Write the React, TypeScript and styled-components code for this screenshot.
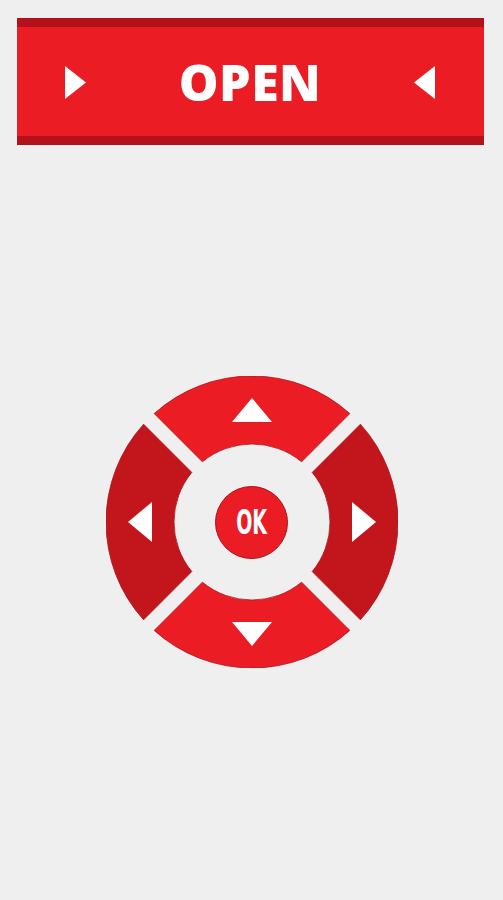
import React from "react";
import styled, { createGlobalStyle } from "styled-components";

const colors = {
  page: "#efefef",
  red: "#ec1c24",
  darkRed: "#c3161c",
  strip: "#b3121a",
  edge: "#a8121a",
  white: "#ffffff",
};

const GlobalStyle = createGlobalStyle`
  html, body {
    margin: 0;
    padding: 0;
    background: ${colors.page};
  }
  body {
    font-family: "Open Sans", "Liberation Sans", sans-serif;
  }
`;

const Screen = styled.div`
  width: 503px;
  height: 900px;
  display: flex;
  flex-direction: column;
  align-items: flex-start;
  background: ${colors.page};
`;

const OpenBar = styled.button`
  box-sizing: border-box;
  margin: 18px 0 0 17px;
  width: 467px;
  height: 127px;
  padding: 0 48px 0 47px;
  display: flex;
  flex-direction: row;
  align-items: center;
  justify-content: space-between;
  background: ${colors.red};
  border: none;
  border-top: 9px solid ${colors.strip};
  border-bottom: 9px solid ${colors.strip};
  cursor: pointer;
`;

const BarLabel = styled.span`
  font-family: "Open Sans", "Liberation Sans", sans-serif;
  font-weight: 800;
  font-size: 50px;
  line-height: 1;
  letter-spacing: 0.5px;
  color: ${colors.white};
  margin-top: 1px;
`;

const Arrow = styled.svg`
  width: 22px;
  height: 33px;
  display: block;
  margin-top: 1px;
`;

const PadArea = styled.div`
  align-self: stretch;
  display: flex;
  justify-content: center;
  margin-top: 231px;
`;

const Pad = styled.div`
  display: grid;
  place-items: center;
  width: 292px;
  height: 292px;

  & > * {
    grid-area: 1 / 1;
  }
`;

const Ring = styled.svg`
  width: 292px;
  height: 292px;
  display: block;
`;

const OkButton = styled.button`
  width: 73px;
  height: 73px;
  border-radius: 50%;
  border: 1px solid ${colors.edge};
  background: ${colors.red};
  display: flex;
  align-items: center;
  justify-content: center;
  padding: 0;
  cursor: pointer;
`;

const OkLabel = styled.span`
  font-family: "DejaVu Sans", "Liberation Sans", sans-serif;
  font-weight: 700;
  font-size: 34px;
  line-height: 1;
  color: ${colors.white};
  transform: scaleX(0.56);
  display: inline-block;
`;

const segment =
  "M -97.8 -108.4 A 146 146 0 0 1 97.8 -108.4 L 49.6 -60.2 A 78 78 0 0 0 -49.6 -60.2 Z";
const chevron = "M 0 -124 L 20 -100 L -20 -100 Z";

const directions = [
  { name: "up", angle: 0, fill: colors.red },
  { name: "right", angle: 90, fill: colors.darkRed },
  { name: "down", angle: 180, fill: colors.red },
  { name: "left", angle: 270, fill: colors.darkRed },
];

const App = () => {
  return (
    <Screen>
      <GlobalStyle />
      <OpenBar>
        <Arrow viewBox="0 0 22 33">
          <path d="M1 0 L22 16.5 L1 33 Z" fill={colors.white} />
        </Arrow>
        <BarLabel>OPEN</BarLabel>
        <Arrow viewBox="0 0 22 33">
          <path d="M21 0 L0 16.5 L21 33 Z" fill={colors.white} />
        </Arrow>
      </OpenBar>
      <PadArea>
        <Pad>
          <Ring viewBox="-146 -146 292 292">
            {directions.map((d) => (
              <g key={d.name} transform={`rotate(${d.angle})`}>
                <path
                  d={segment}
                  fill={d.fill}
                  stroke={colors.edge}
                  strokeWidth={0.8}
                />
                <path d={chevron} fill={colors.white} />
              </g>
            ))}
          </Ring>
          <OkButton>
            <OkLabel>OK</OkLabel>
          </OkButton>
        </Pad>
      </PadArea>
    </Screen>
  );
};

export default App;
